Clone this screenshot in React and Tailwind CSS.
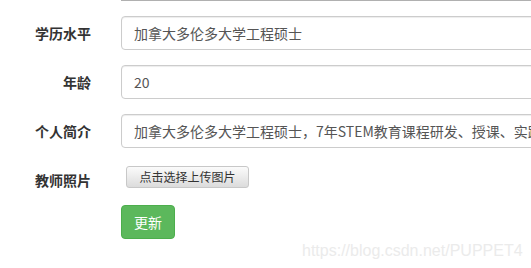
import React from 'react';

const fields = [
  { label: '学历水平', value: '加拿大多伦多大学工程硕士' },
  { label: '年龄', value: '20' },
  { label: '个人简介', value: '加拿大多伦多大学工程硕士，7年STEM教育课程研发、授课、实践经验' },
];

const Label = ({ children }) => (
  <label className="w-[91px] shrink-0 text-right pt-[7px] leading-[20px] text-[14px] font-bold text-[#333]">
    {children}
  </label>
);

const App = () => {
  return (
    <div
      className="relative w-[531px] h-[268px] overflow-hidden bg-white"
      style={{ fontFamily: '"Noto Sans CJK SC", "Open Sans", sans-serif' }}
    >
      {/* bottom edge of the previous field */}
      <div className="ml-[121px] h-px bg-[#b0b0b0]" />

      <form className="pt-[15px]" onSubmit={(e) => e.preventDefault()}>
        {fields.map((f) => (
          <div key={f.label} className="flex mb-[15px]">
            <Label>{f.label}</Label>
            <input
              type="text"
              readOnly
              value={f.value}
              className="ml-[30px] w-[520px] shrink-0 h-[34px] px-[12px] text-[14px] text-[#555] bg-white border border-[#ccc] rounded-[4px] shadow-[inset_0_1px_1px_rgba(0,0,0,0.075)] outline-none"
            />
          </div>
        ))}

        <div className="flex mb-[15px]">
          <Label>教师照片</Label>
          <div className="ml-[35px]">
            <button
              type="button"
              className="h-[22px] w-[123px] text-[12px] leading-[20px] text-[#333] border border-[#c8c8c8] rounded-[3px] bg-gradient-to-b from-[#fbfbfb] to-[#dcdcdc]"
            >
              点击选择上传图片
            </button>
          </div>
        </div>

        <div className="flex">
          <button
            type="submit"
            className="ml-[121px] h-[34px] px-[12px] text-[14px] text-white bg-[#5cb85c] border border-[#4cae4c] rounded-[4px]"
          >
            更新
          </button>
        </div>
      </form>

      <div
        className="absolute left-[302px] top-[239px] text-[16px] text-[#ebebeb] whitespace-nowrap"
        style={{ fontFamily: '"Liberation Sans", Arial, sans-serif' }}
      >
        https://blog.csdn.net/PUPPET4
      </div>
    </div>
  );
};

export default App;
